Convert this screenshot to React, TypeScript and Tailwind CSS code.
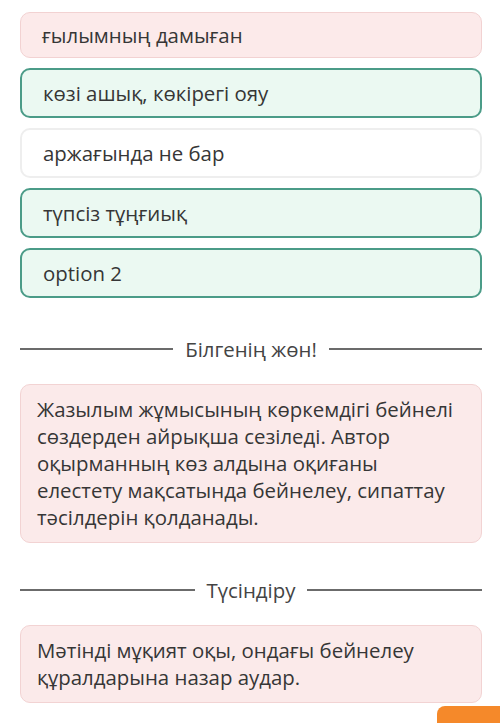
const options = [
  { text: "ғылымның дамыған", tone: "pink", first: true },
  { text: "көзі ашық, көкірегі ояу", tone: "green" },
  { text: "аржағында не бар", tone: "white" },
  { text: "түпсіз тұңғиық", tone: "green" },
  { text: "option 2", tone: "green" },
];

const toneClass: Record<string, string> = {
  pink: "bg-[#fceaea] border border-[#f2d2d2]",
  green: "bg-[#ebf9f2] border-2 border-[#4b9c88]",
  white: "bg-white border-2 border-[#eeeeee]",
};

const Divider = ({ label }: { label: string }) => (
  <div className="flex items-center h-[24px]">
    <div className="flex-1 h-[2px] bg-[#6b6b6b]" />
    <span className="px-[12px] text-[20.4px] text-[#444]">{label}</span>
    <div className="flex-1 h-[2px] bg-[#6b6b6b]" />
  </div>
);

const App = () => {
  return (
    <div
      className="relative w-[500px] h-[723px] bg-white overflow-hidden pl-[20px] pr-[18px] text-[#363636]"
      style={{ fontFamily: '"Open Sans", "Noto Sans", sans-serif' }}
    >
      <div className="flex flex-col gap-[10px] pt-[12px]">
        {options.map((o) => (
          <div
            key={o.text}
            className={`${toneClass[o.tone]} rounded-[10px] flex items-center px-[21px] text-[20.4px] ${o.first ? "h-[46px]" : "h-[50px]"}`}
          >
            {o.text}
          </div>
        ))}
      </div>

      <div className="mt-[39px]">
        <Divider label="Білгенің жөн!" />
      </div>

      <div className="mt-[23px] bg-[#fbeaea] border border-[#f2d3d3] rounded-[10px] pl-[16px] pr-[20px] py-[11px] text-[20.4px] leading-[27px]">
        Жазылым жұмысының көркемдігі бейнелі сөздерден айрықша сезіледі. Автор оқырманның көз алдына оқиғаны елестету мақсатында бейнелеу, сипаттау тәсілдерін қолданады.
      </div>

      <div className="mt-[35px]">
        <Divider label="Түсіндіру" />
      </div>

      <div className="mt-[23px] bg-[#fbeaea] border border-[#f2d3d3] rounded-[10px] pl-[16px] pr-[20px] py-[11px] text-[20.4px] leading-[27px]">
        Мәтінді мұқият оқы, ондағы бейнелеу құралдарына назар аудар.
      </div>

      <div className="absolute right-0 top-[706px] w-[63px] h-[30px] bg-[#f5892a] rounded-tl-[8px]" />
    </div>
  );
};

export default App;
